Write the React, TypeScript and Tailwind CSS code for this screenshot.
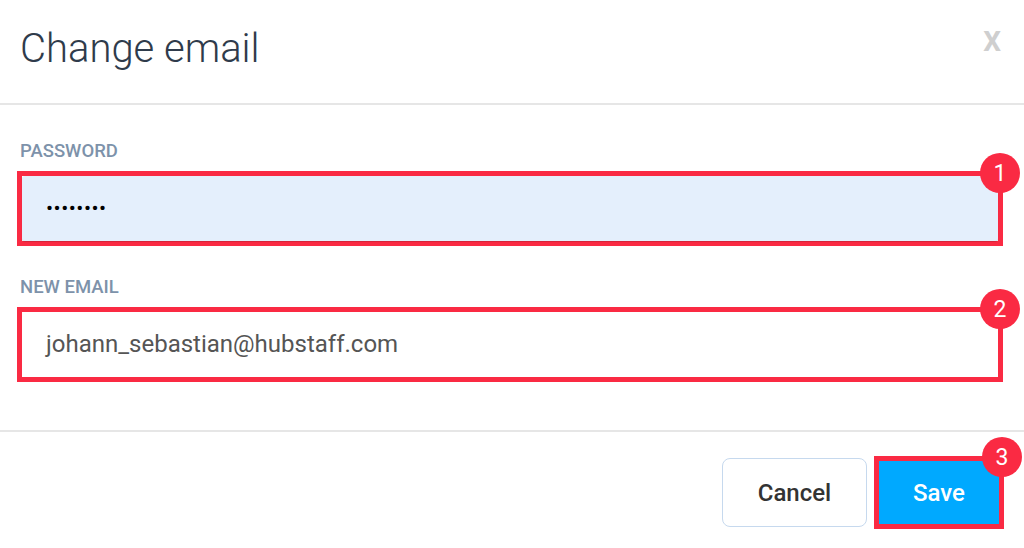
import { ReactNode } from "react";

function Badge({ n, className }: { n: number; className: string }) {
  return (
    <span
      className={`absolute flex h-[40px] w-[40px] items-center justify-center rounded-full bg-[#fa2a43] text-[23px] leading-none text-white ${className}`}
    >
      {n}
    </span>
  );
}

function Field({
  label,
  badge,
  children,
}: {
  label: string;
  badge: number;
  children: ReactNode;
}) {
  return (
    <div className="flex flex-col">
      <label className="h-[20px] pl-[3px] text-[18.5px] font-medium uppercase leading-[20px] text-[#7d92aa]">
        {label}
      </label>
      <div className="relative mt-[10px] h-[75px] w-[986px] border-[5px] border-[#fa2a43]">
        {children}
        <Badge n={badge} className="-right-[22px] -top-[23px]" />
      </div>
    </div>
  );
}

export default function App() {
  return (
    <div className="flex h-[548px] w-[1024px] flex-col bg-white font-['Roboto',sans-serif]">
      <header className="flex h-[105px] items-center justify-between border-b-2 border-[#e6e6e6] pl-5 pr-[23px]">
        <h1 className="pb-[6px] text-[40px] font-light text-[#2f3b4b]">
          Change email
        </h1>
        <button className="pb-[20px] text-[28px] font-bold text-[#cfcfcf]">
          X
        </button>
      </header>

      <div className="flex h-[325px] flex-col gap-[31px] pl-[17px] pt-[36px]">
        <Field label="Password" badge={1}>
          <div className="flex h-full items-center rounded-[3px] bg-[#e4effc] pl-[24px] shadow-[0_1px_1px_rgba(0,0,0,0.15)]">
            <span className="text-[21px] tracking-[0.5px] text-black">
              ••••••••
            </span>
          </div>
        </Field>
        <Field label="New email" badge={2}>
          <div className="flex h-full items-center rounded-[3px] bg-white pl-[24px]">
            <span className="pb-[2px] text-[24px] text-[#555555]">
              johann_sebastian@hubstaff.com
            </span>
          </div>
        </Field>
      </div>

      <footer className="flex flex-1 items-start justify-end gap-[7px] border-t-2 border-[#e6e6e6] pr-5 pt-[24px]">
        <button className="mt-[2px] h-[69px] w-[145px] rounded-[8px] border-[1.5px] border-[#c6d9ee] text-[24px] font-medium text-[#333333]">
          Cancel
        </button>
        <div className="relative h-[73px] w-[130px] border-[5px] border-[#fa2a43]">
          <button className="h-full w-full bg-[#00a9ff] text-[24px] font-medium text-white">
            Save
          </button>
          <Badge n={3} className="-right-[23px] -top-[24px]" />
        </div>
      </footer>
    </div>
  );
}
